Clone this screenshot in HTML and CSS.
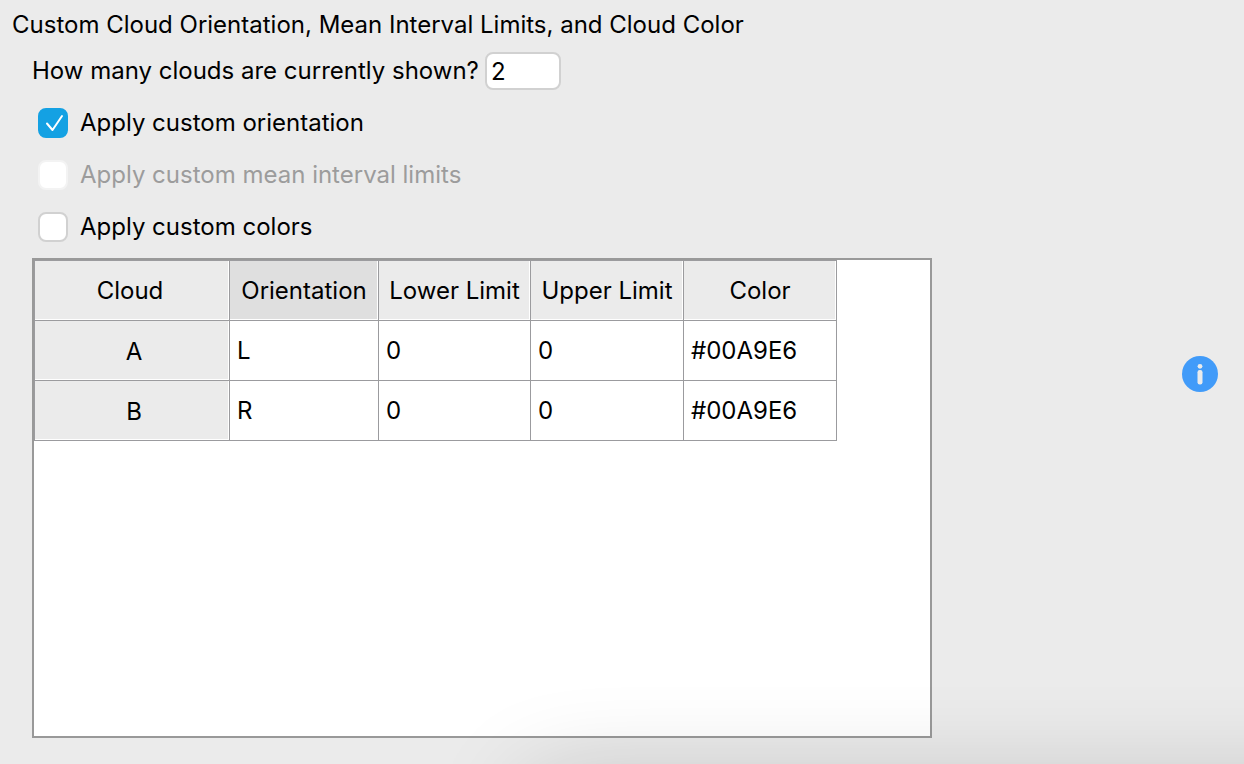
FILE: index.html
```html
<!DOCTYPE html>
<html lang="en">
<head>
<meta charset="utf-8">
<meta name="viewport" content="width=device-width, initial-scale=1">
<title>Custom Cloud Orientation</title>
<link rel="stylesheet" href="styles.css">
</head>
<body>
<main class="page">
  <section class="panel">
    <h1 class="title">Custom Cloud Orientation, Mean Interval Limits, and Cloud Color</h1>
    <form class="options">
      <div class="count">
        <label for="count">How many clouds are currently shown?</label>
        <input class="count-input" id="count" type="text" value="2">
      </div>
      <label class="option"><input class="check" type="checkbox" checked><span>Apply custom orientation</span></label>
      <label class="option option-disabled"><input class="check" type="checkbox" disabled><span>Apply custom mean interval limits</span></label>
      <label class="option"><input class="check" type="checkbox"><span>Apply custom colors</span></label>
      <div class="frame">
        <table class="grid">
          <colgroup><col class="col-cloud"><col class="col-orientation"><col class="col-lower"><col class="col-value"><col class="col-value"></colgroup>
          <thead>
            <tr><th scope="col">Cloud</th><th scope="col" class="active">Orientation</th><th scope="col">Lower Limit</th><th scope="col">Upper Limit</th><th scope="col">Color</th></tr>
          </thead>
          <tbody>
            <tr><th scope="row">A</th><td>L</td><td>0</td><td>0</td><td>#00A9E6</td></tr>
            <tr><th scope="row">B</th><td>R</td><td>0</td><td>0</td><td>#00A9E6</td></tr>
          </tbody>
        </table>
      </div>
    </form>
  </section>
  <button class="info" type="button" aria-label="Information">
    <svg viewBox="0 0 36 36" width="36" height="36" aria-hidden="true">
      <circle cx="18" cy="18" r="18" fill="#419bf9"/>
      <circle cx="18" cy="10.3" r="2.4" fill="#ebebeb"/>
      <rect x="15.5" y="14" width="5" height="14.4" rx="2.2" fill="#ebebeb"/>
    </svg>
  </button>
</main>
</body>
</html>
```
FILE: styles.css
```css
* {
  box-sizing: border-box;
}

body {
  margin: 0;
  background: #ebebeb;
  color: #000;
  font: 24px/30px Inter, "Liberation Sans", sans-serif;
}

.page {
  display: flex;
  align-items: center;
  justify-content: space-between;
  gap: 24px;
  min-height: 100vh;
  padding: 10px 26px 26px 12px;
  overflow: hidden;
  position: relative;
}

/* Soft shadow cast by the window underneath */
.page::after {
  content: "";
  position: absolute;
  top: 100%;
  left: 530px;
  right: -200px;
  height: 200px;
  margin-top: 20px;
  box-shadow: 0 0 100px rgba(0, 0, 0, 0.2);
  pointer-events: none;
}

.panel {
  flex: 0 1 920px;
  align-self: stretch;
  display: flex;
  flex-direction: column;
}

.title {
  margin: 0;
  font-size: 24px;
  font-weight: 400;
}

.options {
  flex: 1;
  display: flex;
  flex-direction: column;
  padding: 12px 0 0 20px;
}

.count {
  display: flex;
  align-items: center;
  gap: 6px;
  margin-bottom: 7px;
}

.count-input {
  width: 76px;
  height: 38px;
  padding: 0 4px;
  border: 2px solid #d1d1d1;
  border-radius: 8px;
  background: #fff;
  color: inherit;
  font: inherit;
}

.option {
  display: flex;
  align-items: center;
  gap: 12px;
  height: 52px;
  padding-left: 6px;
}

.option-disabled {
  color: #9c9c9c;
}

.check {
  appearance: none;
  flex: none;
  width: 30px;
  height: 30px;
  margin: 0;
  border: 2px solid #d1d1d1;
  border-radius: 8px;
  background: #fff;
}

.check:checked {
  border-color: #14a1e3;
  background: #14a1e3 url("data:image/svg+xml,%3Csvg xmlns='http://www.w3.org/2000/svg' viewBox='0 0 30 30'%3E%3Cpath d='M9 15.5 14.5 22 24 8' fill='none' stroke='white' stroke-width='2' stroke-linecap='round' stroke-linejoin='round'/%3E%3C/svg%3E") center / 30px 30px no-repeat;
}

.check:disabled {
  border-color: #f3f3f3;
}

.frame {
  flex: 1;
  margin-top: 5px;
  border: 2px solid #999;
  background: #fff;
}

.grid {
  width: 803px;
  border-collapse: collapse;
  table-layout: fixed;
}

.col-cloud {
  width: 195px;
}

.col-orientation {
  width: 149px;
}

.col-lower {
  width: 152px;
}

.grid th,
.grid td {
  height: 60px;
  padding: 0 7px;
  border: 1px solid #9b9b9e;
  font-weight: 400;
  text-align: left;
  white-space: nowrap;
}

.grid th {
  padding: 0;
  background: #ebebeb;
  box-shadow: inset -1px -1px #fff;
  text-align: center;
}

.grid th:first-child {
  padding-right: 4px;
}

.grid tbody th:first-child {
  padding: 2px 0 0 4px;
}

.grid .active {
  background: #dfdfdf;
}

.info {
  flex: none;
  display: block;
  padding: 0;
  border: 0;
  background: none;
  line-height: 0;
}
```
